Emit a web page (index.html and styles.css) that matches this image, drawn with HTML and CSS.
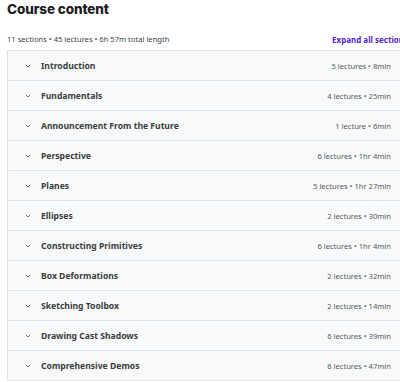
FILE: index.html
```html
<!DOCTYPE html>
<html>
<head>
<meta charset="utf-8">
<link rel="stylesheet" href="styles.css">
</head>
<body>
<div class="wrap">
  <h2 class="title">Course content</h2>
  <div class="meta">
    <span class="stats">11 sections • 45 lectures • 6h 57m total length</span>
    <span class="expand">Expand all sections</span>
  </div>
  <div class="panel">
    <div class="row"><span class="chev"><svg width="6" height="4" viewBox="0 0 6 4"><path d="M0.8 0.8 L3 3 L5.2 0.8" fill="none" stroke="#6a6f73" stroke-width="1"/></svg></span><span class="name">Introduction</span><span class="info">5 lectures • 8min</span></div>
    <div class="row"><span class="chev"><svg width="6" height="4" viewBox="0 0 6 4"><path d="M0.8 0.8 L3 3 L5.2 0.8" fill="none" stroke="#6a6f73" stroke-width="1"/></svg></span><span class="name">Fundamentals</span><span class="info">4 lectures • 25min</span></div>
    <div class="row"><span class="chev"><svg width="6" height="4" viewBox="0 0 6 4"><path d="M0.8 0.8 L3 3 L5.2 0.8" fill="none" stroke="#6a6f73" stroke-width="1"/></svg></span><span class="name">Announcement From the Future</span><span class="info">1 lecture • 6min</span></div>
    <div class="row"><span class="chev"><svg width="6" height="4" viewBox="0 0 6 4"><path d="M0.8 0.8 L3 3 L5.2 0.8" fill="none" stroke="#6a6f73" stroke-width="1"/></svg></span><span class="name">Perspective</span><span class="info">6 lectures • 1hr 4min</span></div>
    <div class="row"><span class="chev"><svg width="6" height="4" viewBox="0 0 6 4"><path d="M0.8 0.8 L3 3 L5.2 0.8" fill="none" stroke="#6a6f73" stroke-width="1"/></svg></span><span class="name">Planes</span><span class="info">5 lectures • 1hr 27min</span></div>
    <div class="row"><span class="chev"><svg width="6" height="4" viewBox="0 0 6 4"><path d="M0.8 0.8 L3 3 L5.2 0.8" fill="none" stroke="#6a6f73" stroke-width="1"/></svg></span><span class="name">Ellipses</span><span class="info">2 lectures • 30min</span></div>
    <div class="row"><span class="chev"><svg width="6" height="4" viewBox="0 0 6 4"><path d="M0.8 0.8 L3 3 L5.2 0.8" fill="none" stroke="#6a6f73" stroke-width="1"/></svg></span><span class="name">Constructing Primitives</span><span class="info">6 lectures • 1hr 4min</span></div>
    <div class="row"><span class="chev"><svg width="6" height="4" viewBox="0 0 6 4"><path d="M0.8 0.8 L3 3 L5.2 0.8" fill="none" stroke="#6a6f73" stroke-width="1"/></svg></span><span class="name">Box Deformations</span><span class="info">2 lectures • 32min</span></div>
    <div class="row"><span class="chev"><svg width="6" height="4" viewBox="0 0 6 4"><path d="M0.8 0.8 L3 3 L5.2 0.8" fill="none" stroke="#6a6f73" stroke-width="1"/></svg></span><span class="name">Sketching Toolbox</span><span class="info">2 lectures • 14min</span></div>
    <div class="row"><span class="chev"><svg width="6" height="4" viewBox="0 0 6 4"><path d="M0.8 0.8 L3 3 L5.2 0.8" fill="none" stroke="#6a6f73" stroke-width="1"/></svg></span><span class="name">Drawing Cast Shadows</span><span class="info">6 lectures • 39min</span></div>
    <div class="row"><span class="chev"><svg width="6" height="4" viewBox="0 0 6 4"><path d="M0.8 0.8 L3 3 L5.2 0.8" fill="none" stroke="#6a6f73" stroke-width="1"/></svg></span><span class="name">Comprehensive Demos</span><span class="info">6 lectures • 47min</span></div>
  </div>
</div>
</body>
</html>
```
FILE: styles.css
```css
html, body {
  margin: 0;
  padding: 0;
  background: #fff;
  overflow: hidden;
}
body {
  width: 400px;
  height: 382px;
  font-family: "Noto Sans", "DejaVu Sans", sans-serif;
  color: #2d2f31;
}
.wrap {
  width: 401px;
  padding-left: 7px;
}
.title {
  margin: 0;
  font-family: Inter, "Noto Sans", sans-serif;
  font-size: 13.5px;
  font-weight: 800;
  line-height: 19px;
  letter-spacing: -0.1px;
  color: #1c1d1f;
}
.meta {
  display: flex;
  justify-content: space-between;
  align-items: center;
  height: 14px;
  margin-top: 13px;
  margin-bottom: 4px;
  font-size: 7.6px;
}
.stats {
  color: #3e4143;
}
.expand {
  color: #5624d0;
  font-weight: 700;
  font-size: 8px;
}
.panel {
  border: 1px solid #dde2e6;
  border-bottom: none;
}
.row {
  display: flex;
  align-items: center;
  height: 29px;
  background: #f7f9fa;
  border-bottom: 1px solid #dde2e6;
  padding: 0 16px 0 17px;
}
.chev {
  display: flex;
  width: 16px;
}
.name {
  flex: 1;
  font-size: 8.6px;
  font-weight: 700;
  color: #3a3d3f;
}
.info {
  font-size: 7.6px;
  color: #55595c;
}
```
